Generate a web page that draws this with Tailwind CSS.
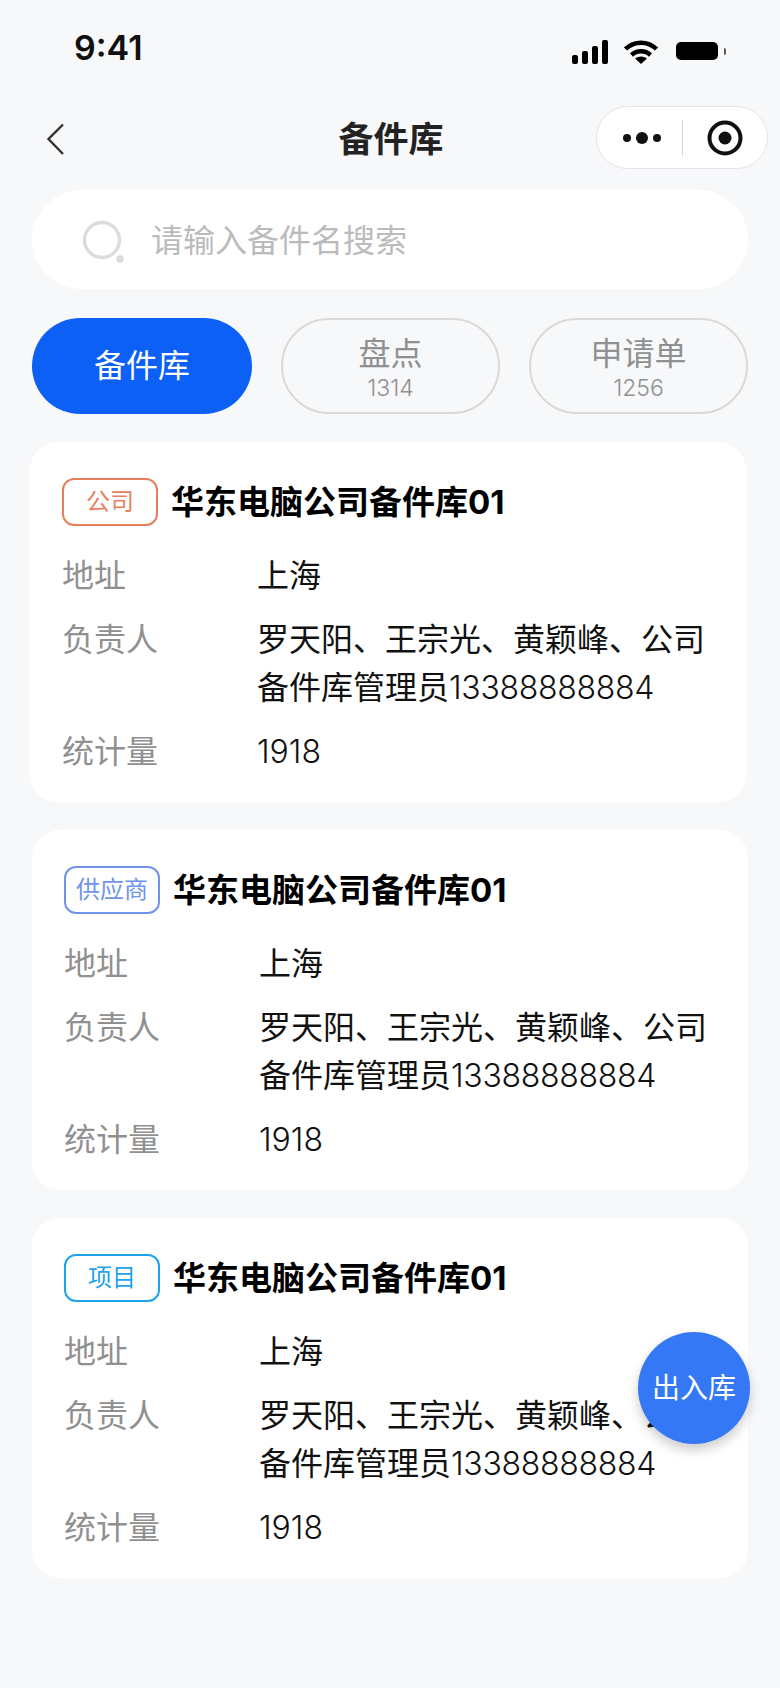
<!DOCTYPE html>
<html lang="zh-CN">
<head>
<meta charset="utf-8">
<script src="https://cdn.jsdelivr.net/npm/@tailwindcss/browser@4"></script>
</head>
<body class="m-0">
<div class="relative w-[780px] h-[1688px] overflow-hidden bg-[#f7f8fa] font-['Inter','Noto_Sans_CJK_SC',sans-serif]">
  <!-- status bar -->
  <div class="h-[106px] flex items-start justify-between pl-[74px] pr-[54px]">
    <span class="mt-[27px] text-[34px] leading-[42px] font-semibold text-[#111]">9:41</span>
    <div class="mt-[40px] flex items-start">
      <svg class="w-[36px] h-[24px]" viewBox="0 0 36 24" fill="#000"><rect x="0" y="15" width="6" height="9" rx="2"/><rect x="10" y="11" width="6" height="13" rx="2"/><rect x="20" y="6" width="6" height="18" rx="2"/><rect x="30" y="0" width="6" height="24" rx="2"/></svg>
      <svg class="ml-[16px] w-[34px] h-[24px]" viewBox="0 0 34 24" fill="none" stroke="#000" stroke-width="4.5"><path d="M1.5 9C10 0.5 24 0.5 32.5 9"/><path d="M7.5 15C12.8 10 21.2 10 26.5 15"/><path d="M17 24L11 18.5C14.5 15.8 19.5 15.8 23 18.5Z" fill="#000" stroke="none"/></svg>
      <div class="ml-[18px] mt-[2px] flex items-center">
        <div class="w-[42px] h-[18px] rounded-[5px] bg-black"></div>
        <div class="ml-[6px] w-[2px] h-[7px] rounded-r-full bg-[#555]"></div>
      </div>
    </div>
  </div>
  <!-- nav -->
  <div class="relative h-[63px] flex items-center justify-between pl-[46px] pr-[12px]">
    <svg class="w-[20px] h-[32px] mt-[2px]" viewBox="0 0 20 32" fill="none" stroke="#333" stroke-width="2.4"><path d="M17 1.5L2.5 16L17 31"/></svg>
    <span class="absolute left-0 right-[-2px] top-[10px] text-center text-[35px] leading-[46px] font-semibold text-[#222]">备件库</span>
    <div class="w-[172px] h-[63px] rounded-full border border-[#e4e4e6] bg-white flex items-center">
      <svg class="ml-[25px] w-[40px] h-[14px]" viewBox="0 0 40 14" fill="#111"><circle cx="5" cy="7" r="4"/><circle cx="20" cy="7" r="6"/><circle cx="35" cy="7" r="4"/></svg>
      <div class="ml-[20px] w-px h-[36px] bg-[#d9d9d9]"></div>
      <svg class="ml-[24px] w-[36px] h-[36px]" viewBox="0 0 36 36"><circle cx="18" cy="18" r="15.5" fill="none" stroke="#111" stroke-width="4"/><circle cx="18" cy="18" r="6.5" fill="#111"/></svg>
    </div>
  </div>
  <!-- search -->
  <div class="mt-[21px] ml-[32px] w-[716px] h-[99px] rounded-full bg-white flex items-center">
    <svg class="ml-[50px] w-[46px] h-[46px] mt-[6px]" viewBox="0 0 46 46"><circle cx="20" cy="20" r="17.5" fill="none" stroke="#dcdcdc" stroke-width="3.4"/><circle cx="38" cy="39" r="3.8" fill="#dcdcdc"/></svg>
    <span class="ml-[23px] mt-[3px] text-[32px] leading-[44px] text-[#bbbbbb]">请输入备件名搜索</span>
  </div>
  <!-- tabs -->
  <div class="mt-[29px] ml-[32px] w-[716px] h-[96px] flex justify-between">
    <div class="w-[220px] rounded-full bg-[#0d60f5] flex items-center justify-center text-[32px] text-white">备件库</div>
    <div class="w-[219px] pt-[4px] rounded-full border-2 border-[#d9d9d9] flex flex-col items-center justify-center text-[#909090]">
      <span class="text-[32px] leading-[40px]">盘点</span>
      <span class="text-[23px] leading-[28px] font-light">1314</span>
    </div>
    <div class="w-[219px] pt-[4px] rounded-full border-2 border-[#d9d9d9] flex flex-col items-center justify-center text-[#909090]">
      <span class="text-[32px] leading-[40px]">申请单</span>
      <span class="text-[23px] leading-[28px] font-light">1256</span>
    </div>
  </div>
  <!-- cards -->
  <div class="mt-[28px] flex flex-col gap-[28px]">
    <div class="ml-[30px] w-[716px] h-[360px] rounded-[28px] bg-white pt-[36px] pl-[32px] pr-[32px]">
      <div class="flex items-center gap-[13px] h-[48px]">
        <div class="w-[96px] h-[48px] rounded-[12px] border-2 border-[#e77f5f] flex items-center justify-center text-[24px] text-[#e77f5f]">公司</div>
        <span class="pt-[2px] text-[33px] font-bold text-black">华东电脑公司备件库01</span>
      </div>
      <div class="mt-[26px] flex flex-col gap-[16px] text-[32px] leading-[48px]">
        <div class="flex"><span class="w-[195px] shrink-0 text-[#909090]">地址</span><span class="text-[#111]">上海</span></div>
        <div class="flex"><span class="w-[195px] shrink-0 text-[#909090]">负责人</span><span class="text-[#111]">罗天阳、王宗光、黄颖峰、公司备件库管理员<span class="font-light tracking-[-0.3px]">13388888884</span></span></div>
        <div class="flex"><span class="w-[195px] shrink-0 text-[#909090]">统计量</span><span class="text-[#111] font-light">1918</span></div>
      </div>
    </div>
    <div class="ml-[32px] w-[716px] h-[360px] rounded-[28px] bg-white pt-[36px] pl-[32px] pr-[32px]">
      <div class="flex items-center gap-[13px] h-[48px]">
        <div class="w-[96px] h-[48px] rounded-[12px] border-2 border-[#6f94ec] flex items-center justify-center text-[24px] text-[#6f94ec]">供应商</div>
        <span class="pt-[2px] text-[33px] font-bold text-black">华东电脑公司备件库01</span>
      </div>
      <div class="mt-[26px] flex flex-col gap-[16px] text-[32px] leading-[48px]">
        <div class="flex"><span class="w-[195px] shrink-0 text-[#909090]">地址</span><span class="text-[#111]">上海</span></div>
        <div class="flex"><span class="w-[195px] shrink-0 text-[#909090]">负责人</span><span class="text-[#111]">罗天阳、王宗光、黄颖峰、公司备件库管理员<span class="font-light tracking-[-0.3px]">13388888884</span></span></div>
        <div class="flex"><span class="w-[195px] shrink-0 text-[#909090]">统计量</span><span class="text-[#111] font-light">1918</span></div>
      </div>
    </div>
    <div class="ml-[32px] w-[716px] h-[360px] rounded-[28px] bg-white pt-[36px] pl-[32px] pr-[32px]">
      <div class="flex items-center gap-[13px] h-[48px]">
        <div class="w-[96px] h-[48px] rounded-[12px] border-2 border-[#1fa3ec] flex items-center justify-center text-[24px] text-[#1fa3ec]">项目</div>
        <span class="pt-[2px] text-[33px] font-bold text-black">华东电脑公司备件库01</span>
      </div>
      <div class="mt-[26px] flex flex-col gap-[16px] text-[32px] leading-[48px]">
        <div class="flex"><span class="w-[195px] shrink-0 text-[#909090]">地址</span><span class="text-[#111]">上海</span></div>
        <div class="flex"><span class="w-[195px] shrink-0 text-[#909090]">负责人</span><span class="text-[#111]">罗天阳、王宗光、黄颖峰、公司备件库管理员<span class="font-light tracking-[-0.3px]">13388888884</span></span></div>
        <div class="flex"><span class="w-[195px] shrink-0 text-[#909090]">统计量</span><span class="text-[#111] font-light">1918</span></div>
      </div>
    </div>
  </div>
  <!-- fab -->
  <div class="absolute left-[638px] top-[1332px] w-[112px] h-[112px] rounded-full bg-[#3478f6] shadow-[0_6px_12px_rgba(0,0,0,0.2)] flex items-center justify-center text-[28px] text-white">出入库</div>
</div>
</body>
</html>
